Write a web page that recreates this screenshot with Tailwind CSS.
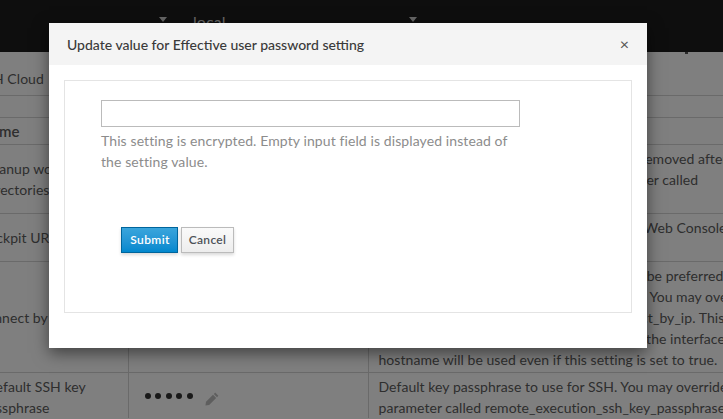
<!DOCTYPE html>
<html lang="en">
  <head>
    <meta charset="UTF-8" />
    <title>Settings</title>
    <script src="https://cdn.jsdelivr.net/npm/@tailwindcss/browser@4"></script>
  </head>
  <body class="relative h-[419px] w-[723px] overflow-hidden bg-white font-['Lato',sans-serif] text-[14px] tracking-[0.05px] text-[#5c5c5c]">
    <!-- Top bar -->
    <header class="flex h-[52px] bg-[#1c1c1c] text-[#cfcfcf]">
      <span class="ml-[159px] mt-[17px] h-0 w-0 border-x-[4px] border-t-[5px] border-x-transparent border-t-[#cfcfcf]"></span>
      <span class="ml-[26px] mt-[10px] w-[216px] text-[16px]">local</span>
      <span class="mt-[17px] h-0 w-0 border-x-[4px] border-t-[5px] border-x-transparent border-t-[#cfcfcf]"></span>
    </header>
    <!-- Tail of a clipped glyph under the bar -->
    <span class="absolute top-[52px] left-[685px] h-[2px] w-[3px] bg-[#555]"></span>

    <!-- Tabs -->
    <div class="h-[44px] border-b border-[#d4d4d4] pt-[16px] pl-0 leading-[22px] whitespace-nowrap">
      <span class="-ml-[7px] inline-block">H Cloud</span>
    </div>
    <div class="h-[21px]"></div>

    <!-- Settings table -->
    <table class="w-[723px] table-fixed border-collapse leading-[21px]">
      <colgroup>
        <col class="w-[128px]" />
        <col class="w-[240px]" />
        <col class="w-[355px]" />
      </colgroup>
      <thead>
        <tr class="h-[27px] border-y border-[#d4d4d4]">
          <th class="overflow-hidden text-left font-semibold whitespace-nowrap"><span class="-ml-[1px] inline-block text-[15px]">me</span></th>
          <th></th>
          <th></th>
        </tr>
      </thead>
      <tbody>
        <tr class="h-[69px] border-b border-[#d4d4d4] align-top">
          <td class="overflow-hidden border-r border-[#d4d4d4] pt-[13px] whitespace-nowrap">
            <div class="-ml-[21px]">Cleanup working</div>
            <div class="-ml-[16px]">directories</div>
          </td>
          <td class="border-r border-[#d4d4d4]"></td>
          <td class="overflow-hidden pt-[3px] pl-[9px] whitespace-nowrap">
            <div>When enabled, working directories will be removed after</div>
            <div>job completes. You can override by parameter called</div>
          </td>
        </tr>
        <tr class="h-[48px] border-b border-[#d4d4d4] align-top">
          <td class="overflow-hidden border-r border-[#d4d4d4] pt-[13px] whitespace-nowrap">
            <div class="-ml-[21px]">Cockpit URL</div>
          </td>
          <td class="border-r border-[#d4d4d4]"></td>
          <td class="overflow-hidden pt-[3px] pl-[10px] whitespace-nowrap">
            <div>Where to find the Cockpit instance for the Web Console</div>
          </td>
        </tr>
        <tr class="h-[111px] border-b border-[#d4d4d4] align-top">
          <td class="overflow-hidden border-r border-[#d4d4d4] pt-[45px] whitespace-nowrap">
            <div class="-ml-[23px]">Connect by IP</div>
          </td>
          <td class="border-r border-[#d4d4d4]"></td>
          <td class="overflow-hidden pt-[3px] pl-[10px] whitespace-nowrap">
            <div class="pl-[4px]">Should the ip addresses on host interfaces be preferred</div>
            <div class="pl-[12px]">fqdn. It is useful when DNS not resolving. You may override</div>
            <div class="pl-[1px]">parameter called remote_execution_connect_by_ip. This</div>
            <div class="pl-[26px]">If the host has only an IPv6 address on the interface</div>
            <div>hostname will be used even if this setting is set to true.</div>
          </td>
        </tr>
        <tr class="align-top">
          <td class="overflow-hidden border-r border-[#d4d4d4] pt-[3px] whitespace-nowrap">
            <div class="-ml-[15px]">Default SSH key</div>
            <div class="-ml-[19px]">passphrase</div>
          </td>
          <td class="border-r border-[#d4d4d4] pt-[12px] pl-[16px]">
            <div class="flex items-center gap-[4.5px]">
              <span class="size-[6px] rounded-full bg-[#333]"></span>
              <span class="size-[6px] rounded-full bg-[#333]"></span>
              <span class="size-[6px] rounded-full bg-[#333]"></span>
              <span class="size-[6px] rounded-full bg-[#333]"></span>
              <span class="size-[6px] rounded-full bg-[#333]"></span>
              <svg class="mt-[7px] ml-[7.5px]" width="14" height="14" viewBox="0 0 14 14" fill="#bdbdbd">
                <path d="M10.2 0.6 13.4 3.8 12 5.2 8.8 2Z" />
                <path d="M8 2.8 11.2 6 4.2 13 0.4 13.6 1 9.8Z" />
              </svg>
            </div>
          </td>
          <td class="overflow-hidden pt-[3px] pl-[10px] whitespace-nowrap">
            <div>Default key passphrase to use for SSH. You may override per host by setting a</div>
            <div>parameter called remote_execution_ssh_key_passphrase</div>
          </td>
        </tr>
      </tbody>
    </table>

    <!-- Backdrop -->
    <div class="absolute inset-0 bg-black/50"></div>

    <!-- Modal -->
    <div class="absolute top-[23px] left-[49px] h-[325px] w-[598px] bg-white shadow-[0_5px_15px_rgba(0,0,0,0.5)]">
      <div class="flex h-[42px] items-center justify-between bg-[#f4f4f4] pr-[18px] pl-[18px] text-[#3a3a3a]">
        <h4 class="text-[14px] font-medium tracking-normal">Update value for Effective user password setting</h4>
        <button class="text-[16px] leading-none text-[#555]">×</button>
      </div>
      <div class="p-[15px]">
        <form class="h-[233px] border border-[#e4e4e4] pt-[19px] pl-[36px]">
          <input type="password" class="block h-[27px] w-[419px] border border-[#bbb] bg-white" />
          <p class="mt-[3px] w-[419px] leading-[21px] tracking-[0.1px] text-[#8c8c8c]">This setting is encrypted. Empty input field is displayed instead of the setting value.</p>
          <div class="mt-[55px] ml-[20px] flex gap-[3px] text-[12px]">
            <button type="button" class="h-[26px] w-[57px] border border-[#00659c] bg-gradient-to-b from-[#39a5dc] to-[#0088ce] pl-[1px] font-semibold tracking-[0.4px] text-white shadow-[0_2px_3px_rgba(3,3,3,0.15)]">Submit</button>
            <button type="button" class="h-[26px] w-[53px] border border-[#bbb] bg-gradient-to-b from-[#fafafa] to-[#ededed] font-semibold tracking-[0.3px] text-[#4d5258] shadow-[0_2px_3px_rgba(3,3,3,0.15)]">Cancel</button>
          </div>
        </form>
      </div>
    </div>
  </body>
</html>
